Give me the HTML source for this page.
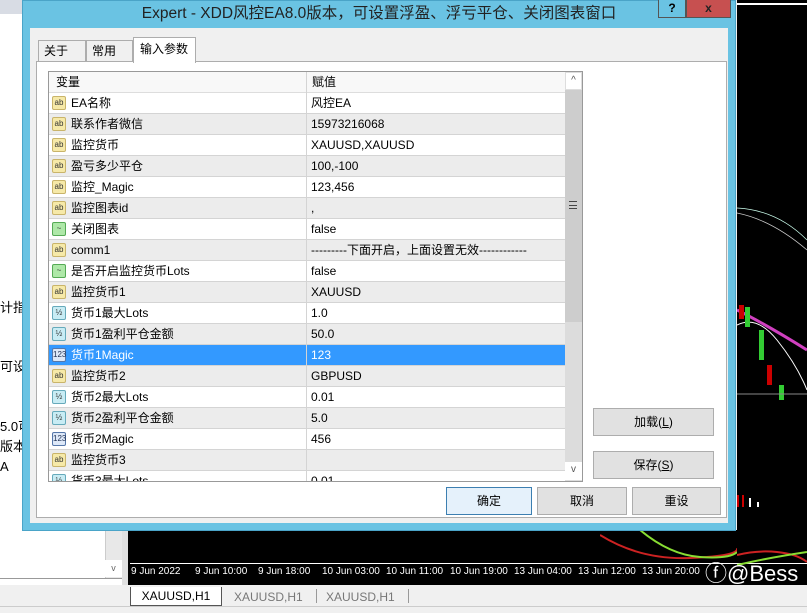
<!DOCTYPE html>
<html><head><meta charset="utf-8"><style>
*{margin:0;padding:0;box-sizing:border-box}
body{width:807px;height:613px;position:relative;overflow:hidden;background:#f0f0f0;font-family:"Liberation Sans","Noto Sans CJK SC",sans-serif;font-size:12px;line-height:16px;color:#000}
.a{position:absolute}
.row{position:absolute;left:0;width:516px;height:21px;border-bottom:1px solid #d4d4d4}
.row span{position:absolute;top:0;line-height:20px;white-space:nowrap}
.ic{position:absolute;left:3px;top:3px;width:14px;height:14px;border:1px solid #c9b46a;background:#f6e9a8;border-radius:2px;font-size:8px;line-height:12px;text-align:center;color:#333;font-style:normal}
.btn{position:absolute;background:#e1e1e1;border:1px solid #adadad;text-align:center;line-height:26px;font-size:12px}
.tl{position:absolute;top:566px;color:#fff;font-size:10px;line-height:12px}
.cj{position:absolute;font-size:13px;line-height:16px}
</style></head><body>
<div class="a" style="left:0;top:0;width:22px;height:585px;background:#fff"></div>
<div class="a" style="left:0;top:0;width:22px;height:14px;background:#d8dce4"></div>
<div class="cj" style="left:0;top:300px">计指</div>
<div class="cj" style="left:0;top:359px">可设置</div>
<div class="cj" style="left:0;top:419px">5.0可</div>
<div class="cj" style="left:0;top:439px">版本</div>
<div class="cj" style="left:0;top:459px">A</div>
<div class="a" style="left:0;top:530px;width:122px;height:55px;background:#fff"></div>
<div class="a" style="left:105px;top:530px;width:17px;height:48px;background:#e8e8e8;border-left:1px solid #ccc"></div>
<div class="a" style="left:105px;top:560px;width:17px;height:17px;background:#fff;font-size:9px;text-align:center;color:#666">v</div>
<div class="a" style="left:0;top:578px;width:122px;height:1px;background:#999"></div>
<div class="a" style="left:737px;top:0;width:70px;height:585px;background:#000"></div>
<div class="a" style="left:737px;top:3px;width:70px;height:2px;background:#fff"></div>
<div class="a" style="left:122px;top:530px;width:685px;height:55px;background:#000;border-left:6px solid #e0e0e0"></div>
<div class="a" style="left:130px;top:563px;width:677px;height:1px;background:#fff"></div>
<svg class="a" style="left:737px;top:180px" width="70" height="400">
<path d="M0 28 Q40 30 70 60" stroke="#cfe" fill="none" stroke-width="0.7"/>
<path d="M0 33 Q35 40 70 70" stroke="#ccc" fill="none" stroke-width="0.7"/>
<path d="M0 130 Q30 145 70 170" stroke="#d040c0" fill="none" stroke-width="3"/>
<path d="M0 145 Q20 135 40 160 T70 210" stroke="#fff" fill="none" stroke-width="1"/>
<rect x="2" y="125" width="5" height="14" fill="#c00"/><rect x="8" y="127" width="5" height="20" fill="#3c3"/>
<rect x="22" y="150" width="5" height="30" fill="#3c3"/><rect x="30" y="185" width="5" height="20" fill="#c00"/>
<rect x="42" y="205" width="5" height="15" fill="#3c3"/>
<line x1="0" y1="214" x2="70" y2="214" stroke="#888"/>
<rect x="0" y="315" width="2" height="12" fill="#c00"/><rect x="5" y="315" width="2" height="12" fill="#c00"/><rect x="12" y="318" width="2" height="9" fill="#fff"/><rect x="20" y="322" width="2" height="5" fill="#fff"/>
<path d="M0 375 Q20 370 40 372 T70 382" stroke="#c22" fill="none" stroke-width="2"/>
<path d="M0 385 Q30 378 70 372" stroke="#8d3" fill="none" stroke-width="2"/>
</svg>
<svg class="a" style="left:600px;top:530px" width="137" height="35">
<path d="M0 5 Q40 30 90 28 T137 18" stroke="#c22" fill="none" stroke-width="2"/>
<path d="M40 0 Q70 25 100 27 T137 22" stroke="#8d3" fill="none" stroke-width="2"/>
</svg>
<div class="tl" style="left:131px">9 Jun 2022</div>
<div class="tl" style="left:195px">9 Jun 10:00</div>
<div class="tl" style="left:258px">9 Jun 18:00</div>
<div class="tl" style="left:322px">10 Jun 03:00</div>
<div class="tl" style="left:386px">10 Jun 11:00</div>
<div class="tl" style="left:450px">10 Jun 19:00</div>
<div class="tl" style="left:514px">13 Jun 04:00</div>
<div class="tl" style="left:578px">13 Jun 12:00</div>
<div class="tl" style="left:642px">13 Jun 20:00</div>
<div class="a" style="left:705px;top:561px;color:#fff;font-size:22px;line-height:26px">ⓕ@Bess</div>
<div class="a" style="left:130px;top:587px;width:92px;height:19px;background:#fff;border:1px solid #555;border-top:none;text-align:center;line-height:18px">XAUUSD,H1</div>
<div class="a" style="left:234px;top:589px;color:#777">XAUUSD,H1</div>
<div class="a" style="left:316px;top:589px;width:1px;height:14px;background:#999"></div>
<div class="a" style="left:326px;top:589px;color:#777">XAUUSD,H1</div>
<div class="a" style="left:408px;top:589px;width:1px;height:14px;background:#999"></div>
<div class="a" style="left:0;top:606px;width:807px;height:7px;background:#f0f0f0;border-top:1px solid #ccc"></div>
<!-- dialog -->
<div class="a" style="left:22px;top:0;width:714px;height:531px;background:#6ac3e3;border:1px solid #4aa4c8"></div>
<div class="a" style="left:30px;top:28px;width:698px;height:495px;background:#f0f0f0"></div>
<div class="a" style="left:30px;top:4px;width:698px;text-align:center;font-size:15.5px;line-height:20px;color:#222">Expert - XDD风控EA8.0版本，可设置浮盈、浮亏平仓、关闭图表窗口</div>
<div class="a" style="left:658px;top:0;width:28px;height:18px;border:1px solid #555;border-top:none;background:#6ac3e3;text-align:center;font-weight:bold;line-height:16px">?</div>
<div class="a" style="left:686px;top:0;width:45px;height:18px;background:#c75050;border:1px solid #555;border-top:none;text-align:center;font-weight:bold;color:#222;line-height:16px">x</div>
<div class="a" style="left:36px;top:61px;width:691px;height:457px;background:#fff;border:1px solid #adadad"></div>
<div class="a" style="left:38px;top:40px;width:48px;height:22px;background:#f0f0f0;border:1px solid #adadad;padding:0 5px;line-height:21px">关于</div>
<div class="a" style="left:86px;top:40px;width:47px;height:22px;background:#f0f0f0;border:1px solid #adadad;padding:0 5px;line-height:21px">常用</div>
<div class="a" style="left:133px;top:37px;width:63px;height:26px;background:#fff;border:1px solid #adadad;border-bottom:none;padding:0 6px;line-height:22px">输入参数</div>
<div class="a" style="left:48px;top:71px;width:535px;height:411px;border:1px solid #999;background:#fff"></div>
<div class="a" style="left:49px;top:72px;width:516px;height:21px;background:#f8f8f8;border-bottom:1px solid #ddd;line-height:21px"><span class="a" style="left:7px">变量</span><span class="a" style="left:263px">赋值</span></div>
<div class="a" style="left:565px;top:72px;width:17px;height:409px;background:#dcdcdc"></div>
<div class="a" style="left:565px;top:72px;width:17px;height:18px;background:#fff;border:1px solid #ddd;text-align:center;font-size:10px;color:#555">^</div>
<div class="a" style="left:565px;top:90px;width:17px;height:232px;background:#cdcdcd"></div>
<div class="a" style="left:569px;top:201px;width:8px;height:8px;border-top:1px solid #444;border-bottom:1px solid #444"></div>
<div class="a" style="left:569px;top:205px;width:8px;height:1px;background:#444"></div>
<div class="a" style="left:565px;top:462px;width:17px;height:18px;background:#fff;text-align:center;font-size:10px;color:#555">v</div>
<div class="a" style="left:49px;top:93px;width:516px;height:388px;overflow:hidden">
<div class="row" style="top:0;background:#fff"><i class="ic">ab</i><span style="left:22px">EA名称</span><span style="left:262px">风控EA</span></div>
<div class="row" style="top:21px;background:#ececec"><i class="ic">ab</i><span style="left:22px">联系作者微信</span><span style="left:262px">15973216068</span></div>
<div class="row" style="top:42px;background:#fff"><i class="ic">ab</i><span style="left:22px">监控货币</span><span style="left:262px">XAUUSD,XAUUSD</span></div>
<div class="row" style="top:63px;background:#ececec"><i class="ic">ab</i><span style="left:22px">盈亏多少平仓</span><span style="left:262px">100,-100</span></div>
<div class="row" style="top:84px;background:#fff"><i class="ic">ab</i><span style="left:22px">监控_Magic</span><span style="left:262px">123,456</span></div>
<div class="row" style="top:105px;background:#ececec"><i class="ic">ab</i><span style="left:22px">监控图表id</span><span style="left:262px">,</span></div>
<div class="row" style="top:126px;background:#fff"><i class="ic" style="background:#aee8a8;border-color:#5a5">~</i><span style="left:22px">关闭图表</span><span style="left:262px">false</span></div>
<div class="row" style="top:147px;background:#ececec"><i class="ic">ab</i><span style="left:22px">comm1</span><span style="left:262px">---------下面开启，上面设置无效------------</span></div>
<div class="row" style="top:168px;background:#fff"><i class="ic" style="background:#aee8a8;border-color:#5a5">~</i><span style="left:22px">是否开启监控货币Lots</span><span style="left:262px">false</span></div>
<div class="row" style="top:189px;background:#ececec"><i class="ic">ab</i><span style="left:22px">监控货币1</span><span style="left:262px">XAUUSD</span></div>
<div class="row" style="top:210px;background:#fff"><i class="ic" style="background:#c8ecf4;border-color:#6ab">½</i><span style="left:22px">货币1最大Lots</span><span style="left:262px">1.0</span></div>
<div class="row" style="top:231px;background:#ececec"><i class="ic" style="background:#c8ecf4;border-color:#6ab">½</i><span style="left:22px">货币1盈利平仓金额</span><span style="left:262px">50.0</span></div>
<div class="row" style="top:252px;background:#3399ff;color:#fff"><i class="ic" style="background:#dde8f8;border-color:#57a;color:#235">123</i><span style="left:22px">货币1Magic</span><span style="left:262px">123</span></div>
<div class="row" style="top:273px;background:#ececec"><i class="ic">ab</i><span style="left:22px">监控货币2</span><span style="left:262px">GBPUSD</span></div>
<div class="row" style="top:294px;background:#fff"><i class="ic" style="background:#c8ecf4;border-color:#6ab">½</i><span style="left:22px">货币2最大Lots</span><span style="left:262px">0.01</span></div>
<div class="row" style="top:315px;background:#ececec"><i class="ic" style="background:#c8ecf4;border-color:#6ab">½</i><span style="left:22px">货币2盈利平仓金额</span><span style="left:262px">5.0</span></div>
<div class="row" style="top:336px;background:#fff"><i class="ic" style="background:#dde8f8;border-color:#57a;color:#235">123</i><span style="left:22px">货币2Magic</span><span style="left:262px">456</span></div>
<div class="row" style="top:357px;background:#ececec"><i class="ic">ab</i><span style="left:22px">监控货币3</span><span style="left:262px"></span></div>
<div class="row" style="top:378px;background:#fff"><i class="ic" style="background:#c8ecf4;border-color:#6ab">½</i><span style="left:22px">货币3最大Lots</span><span style="left:262px">0.01</span></div>
</div>
<div class="a" style="left:306px;top:72px;width:1px;height:409px;background:#d4d4d4"></div>
<div class="btn" style="left:593px;top:408px;width:121px;height:28px">加载(<u>L</u>)</div>
<div class="btn" style="left:593px;top:451px;width:121px;height:28px">保存(<u>S</u>)</div>
<div class="btn" style="left:446px;top:487px;width:86px;height:28px;border-color:#3c7fb1;background:#e5f1fb">确定</div>
<div class="btn" style="left:537px;top:487px;width:90px;height:28px">取消</div>
<div class="btn" style="left:632px;top:487px;width:89px;height:28px">重设</div>
</body></html>
